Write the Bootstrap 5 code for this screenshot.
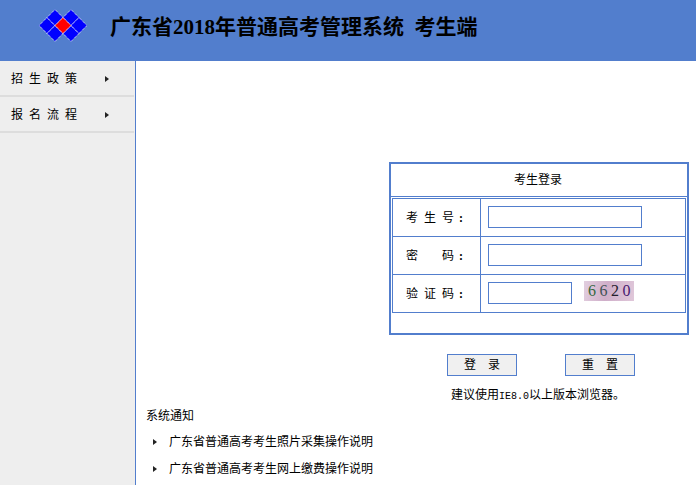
<!DOCTYPE html>
<html lang="zh-CN">
  <head>
    <meta charset="UTF-8" />
    <meta name="viewport" content="width=device-width, initial-scale=1.0" />
    <title>广东省2018年普通高考管理系统 考生端</title>
    <link href="https://cdn.jsdelivr.net/npm/bootstrap@5.3.0/dist/css/bootstrap.min.css" rel="stylesheet" />
    <style>
      html, body { height: 100%; overflow: hidden; }
      body {
        background-color: #fff;
        color: #000;
        font-family: "Liberation Serif", "Noto Sans CJK SC", serif;
        font-size: 12px;
        line-height: 16px;
      }
      .top-bar {
        height: 61px;
        background-color: #527ecd;
        padding-left: 39px;
        padding-bottom: 10px;
      }
      .top-title {
        margin: 2px 0 0 23px;
        font-size: 21px;
        font-weight: 700;
        line-height: 28px;
        white-space: pre;
      }
      .side-menu {
        width: 136px;
        background-color: #eee;
        border-right: 1px solid #527ecd;
      }
      .side-item {
        height: 36px;
        width: 134px;
        padding: 2px 25px 0 11px;
        border-bottom: 2px solid #ddd;
        letter-spacing: 6px;
      }
      .arrow-mark {
        width: 0;
        height: 0;
        border-style: solid;
        border-width: 3.5px 0 3.5px 4px;
        border-color: transparent transparent transparent #222;
      }
      .login-col { width: 300px; margin: 101px 7px 0 auto; }
      .login-box { height: 173px; border: 2px solid #527ecd; }
      .login-title { height: 33px; padding-right: 2px; border-bottom: 1px solid #527ecd; }
      .login-table {
        width: 294px;
        margin: 1px 0 0 1px;
        border-collapse: collapse;
      }
      .login-table td { height: 38px; border: 1px solid #527ecd; padding: 0; }
      .login-table .label-cell { width: 88px; padding-left: 13px; letter-spacing: 6px; white-space: nowrap; }
      .login-table .label-cell b { letter-spacing: 0; margin-left: -1px; }
      .login-table .field-cell { padding: 0 0 1px 7px; }
      .field-input {
        display: block;
        width: 154px;
        height: 22px;
        padding: 0 3px;
        border: 1px solid #527ecd;
        border-radius: 0;
        outline: 0;
      }
      .field-short { width: 84px; }
      .captcha-box {
        width: 50px;
        height: 20px;
        margin: 0 0 4px 12px;
        padding-left: 4px;
        background-color: #dcc0d6;
        background-image: linear-gradient(100deg, #e2cfdf, #cfaec9 45%, #e0c8da);
        font-family: "Liberation Serif", serif;
        font-size: 16px;
        line-height: 20px;
        letter-spacing: 3.5px;
        white-space: nowrap;
      }
      .cap-a { color: #35683f; }
      .cap-b { color: #3f5256; }
      .cap-c { color: #24202c; }
      .cap-d { color: #48186e; }
      .btn-row { margin-top: 19px; padding-left: 58px; gap: 48px; }
      .btn-plain {
        width: 70px;
        height: 22px;
        padding: 0;
        background-color: #f0f0f0;
        border: 1px solid #527ecd;
        border-radius: 0;
        color: #000;
        font-size: 12px;
        line-height: 18px;
        letter-spacing: 0;
      }
      .btn-plain:hover { background-color: #f0f0f0; border-color: #527ecd; color: #000; }
      .browser-hint { margin: 11px 0 0 62px; white-space: nowrap; }
      .browser-hint span { font-family: "Liberation Mono", monospace; font-size: 10px; }
      .notice-box { padding: 3px 0 0 10px; }
      .notice-list { margin: 4px 0 0; padding: 0 0 0 7px; list-style: none; }
      .notice-list li { height: 27px; gap: 12px; }
      .notice-list a { color: #000; text-decoration: none; }
    </style>
  </head>
  <body>
    <div class="d-flex flex-column h-100">
      <!-- 顶部标题 -->
      <header class="top-bar d-flex align-items-center flex-shrink-0">
        <svg width="48" height="34" viewBox="39 8.5 48 34" aria-hidden="true">
          <g stroke="#fff" stroke-width="1" stroke-dasharray="1 1">
            <path d="M39 25l8-8 8 8-8 8z" fill="#00f" />
            <path d="M47 17l8-8 8 8-8 8z" fill="#00f" />
            <path d="M47 33l8-8 8 8-8 8z" fill="#00f" />
            <path d="M63 17l8-8 8 8-8 8z" fill="#00f" />
            <path d="M63 33l8-8 8 8-8 8z" fill="#00f" />
            <path d="M71 25l8-8 8 8-8 8z" fill="#00f" />
            <path d="M55 25l8-8 8 8-8 8z" fill="#f00" />
          </g>
        </svg>
        <h1 class="top-title">广东省2018年普通高考管理系统  考生端</h1>
      </header>

      <div class="d-flex flex-grow-1">
        <!-- 左侧菜单 -->
        <nav class="side-menu flex-shrink-0">
          <div class="side-item d-flex align-items-center justify-content-between">招生政策<span class="arrow-mark"></span></div>
          <div class="side-item d-flex align-items-center justify-content-between">报名流程<span class="arrow-mark"></span></div>
        </nav>

        <main class="flex-grow-1">
          <div class="login-col">
            <form onsubmit="return false">
              <div class="login-box">
                <div class="login-title d-flex align-items-center justify-content-center">考生登录</div>
                <table class="login-table">
                  <tr>
                    <td class="label-cell">考生号<b>:</b></td>
                    <td class="field-cell"><input type="text" class="field-input" /></td>
                  </tr>
                  <tr>
                    <td class="label-cell">密　码<b>:</b></td>
                    <td class="field-cell"><input type="password" class="field-input" /></td>
                  </tr>
                  <tr>
                    <td class="label-cell">验证码<b>:</b></td>
                    <td class="field-cell">
                      <div class="d-flex align-items-center">
                        <input type="text" class="field-input field-short" />
                        <div class="captcha-box"><span class="cap-a">6</span><span class="cap-b">6</span><span class="cap-c">2</span><span class="cap-d">0</span></div>
                      </div>
                    </td>
                  </tr>
                </table>
              </div>
              <div class="btn-row d-flex">
                <button type="submit" class="btn btn-plain">登　录</button>
                <button type="reset" class="btn btn-plain">重　置</button>
              </div>
            </form>
            <div class="browser-hint">建议使用<span>IE8.0</span>以上版本浏览器。</div>
          </div>

          <!-- 系统通知 -->
          <div class="notice-box">
            <div>系统通知</div>
            <ul class="notice-list">
              <li class="d-flex align-items-center"><span class="arrow-mark"></span><a href="#">广东省普通高考考生照片采集操作说明</a></li>
              <li class="d-flex align-items-center"><span class="arrow-mark"></span><a href="#">广东省普通高考考生网上缴费操作说明</a></li>
            </ul>
          </div>
        </main>
      </div>
    </div>

    <script src="https://cdn.jsdelivr.net/npm/bootstrap@5.3.0/dist/js/bootstrap.bundle.min.js"></script>
  </body>
</html>
